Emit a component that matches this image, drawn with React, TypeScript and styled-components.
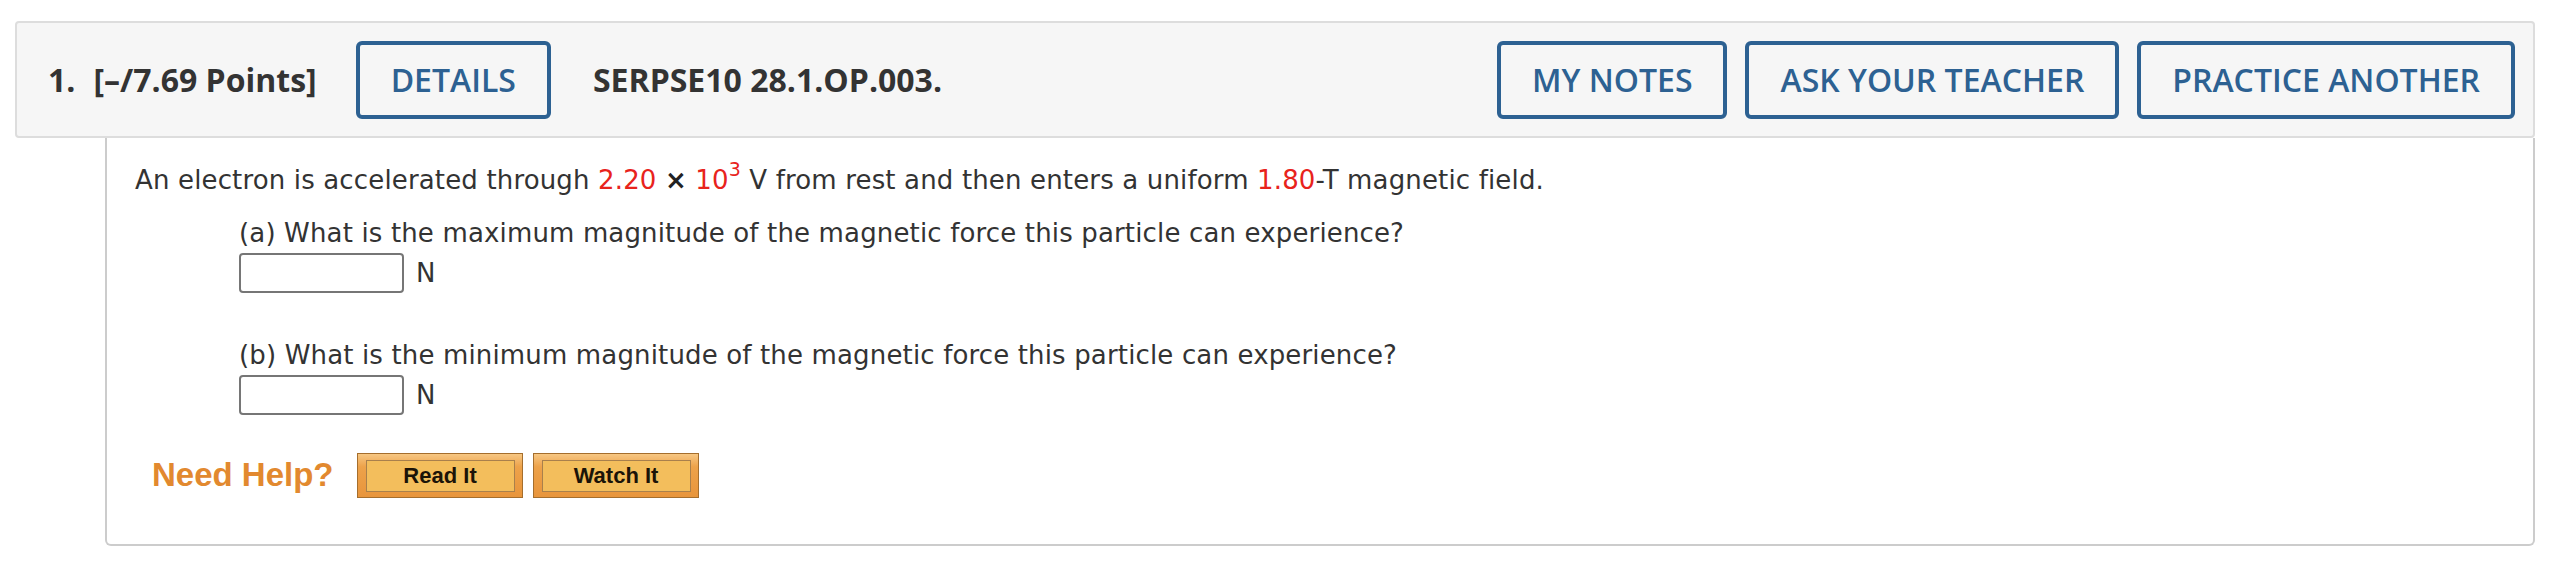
import styled, { createGlobalStyle } from 'styled-components';

const GlobalStyle = createGlobalStyle`
  body {
    margin: 0;
    background: #fff;
  }
`;

const Page = styled.div`
  padding: 21px 17px 0 15px;
`;

const Header = styled.div`
  display: flex;
  align-items: center;
  height: 117px;
  box-sizing: border-box;
  padding: 0 18px 0 31px;
  background: #f6f6f6;
  border: 2px solid #dddddd;
  border-radius: 4px;
  font-family: 'Open Sans', 'Liberation Sans', sans-serif;
  color: #333;
`;

const HeadText = styled.span<{ $gap?: number }>`
  font-size: 32px;
  font-weight: 700;
  white-space: nowrap;
  margin-right: ${(p) => p.$gap ?? 0}px;
`;

const Actions = styled.div`
  display: flex;
  gap: 18px;
  margin-left: auto;
`;

const OutlineButton = styled.button<{ $gap?: number }>`
  display: flex;
  align-items: center;
  justify-content: center;
  height: 78px;
  box-sizing: border-box;
  padding: 0 31px;
  margin-right: ${(p) => p.$gap ?? 0}px;
  background: transparent;
  border: 4px solid #2d6192;
  border-radius: 6px;
  color: #2d6192;
  font-family: 'Open Sans', 'Liberation Sans', sans-serif;
  font-size: 32px;
  font-weight: 600;
  white-space: nowrap;
`;

const Panel = styled.div`
  margin-left: 90px;
  padding: 24px 0 46px 28px;
  border: 2px solid #cccccc;
  border-top: none;
  border-radius: 0 0 6px 6px;
  font-family: 'DejaVu Sans', Verdana, sans-serif;
  font-size: 26px;
  letter-spacing: 0.15px;
  color: #333;
`;

const Line = styled.div<{ $top?: number }>`
  line-height: 36px;
  margin-top: ${(p) => p.$top ?? 0}px;
  white-space: nowrap;
`;

const Red = styled.span`
  color: #e8231c;
`;

const Sup = styled.sup`
  color: #e8231c;
  font-size: 19px;
  line-height: 0;
  vertical-align: 13px;
`;

const Times = styled.span`
  font-weight: 700;
  color: #222;
`;

const Part = styled.div`
  margin-left: 104px;
`;

const AnswerRow = styled.div`
  display: flex;
  align-items: center;
  gap: 12px;
  margin-top: 2px;
  height: 40px;
`;

const AnswerInput = styled.input`
  width: 165px;
  height: 40px;
  box-sizing: border-box;
  border: 2px solid #767676;
  border-radius: 4px;
  background: #fff;
  margin: 0;
`;

const HelpRow = styled.div`
  display: flex;
  align-items: center;
  margin: 38px 0 0 17px;
  height: 45px;
`;

const HelpLabel = styled.span`
  font-family: 'Liberation Sans', Arial, sans-serif;
  font-size: 33px;
  font-weight: 700;
  letter-spacing: 0;
  color: #e2892f;
  margin-right: 23px;
  margin-top: -2px;
`;

const HelpButton = styled.div`
  width: 166px;
  height: 45px;
  box-sizing: border-box;
  padding: 6px 7px 5px 8px;
  margin-right: 10px;
  border: 1px solid #a56e2d;
  background: linear-gradient(#f7c783 0%, #eda24a 30%, #e8953c 100%);
`;

const HelpInner = styled.div`
  display: flex;
  align-items: center;
  justify-content: center;
  height: 100%;
  box-sizing: border-box;
  border: 1px solid #a9804c;
  background: #f3be5c;
  font-family: 'Liberation Sans', Arial, sans-serif;
  font-size: 22px;
  font-weight: 700;
  letter-spacing: 0;
  color: #1b1408;
`;

export default function App() {
  return (
    <Page>
      <GlobalStyle />
      <Header>
        <HeadText $gap={18}>1.</HeadText>
        <HeadText $gap={39}>[–/7.69 Points]</HeadText>
        <OutlineButton $gap={42}>DETAILS</OutlineButton>
        <HeadText>SERPSE10 28.1.OP.003.</HeadText>
        <Actions>
          <OutlineButton>MY NOTES</OutlineButton>
          <OutlineButton>ASK YOUR TEACHER</OutlineButton>
          <OutlineButton>PRACTICE ANOTHER</OutlineButton>
        </Actions>
      </Header>
      <Panel>
        <Line>
          An electron is accelerated through <Red>2.20</Red> <Times>×</Times> <Red>10</Red>
          <Sup>3</Sup> V from rest and then enters a uniform <Red>1.80</Red>-T magnetic field.
        </Line>
        <Part>
          <Line $top={17}>(a) What is the maximum magnitude of the magnetic force this particle can experience?</Line>
          <AnswerRow>
            <AnswerInput type="text" />
            <span>N</span>
          </AnswerRow>
          <Line $top={44}>(b) What is the minimum magnitude of the magnetic force this particle can experience?</Line>
          <AnswerRow>
            <AnswerInput type="text" />
            <span>N</span>
          </AnswerRow>
        </Part>
        <HelpRow>
          <HelpLabel>Need Help?</HelpLabel>
          <HelpButton>
            <HelpInner>Read It</HelpInner>
          </HelpButton>
          <HelpButton>
            <HelpInner>Watch It</HelpInner>
          </HelpButton>
        </HelpRow>
      </Panel>
    </Page>
  );
}
